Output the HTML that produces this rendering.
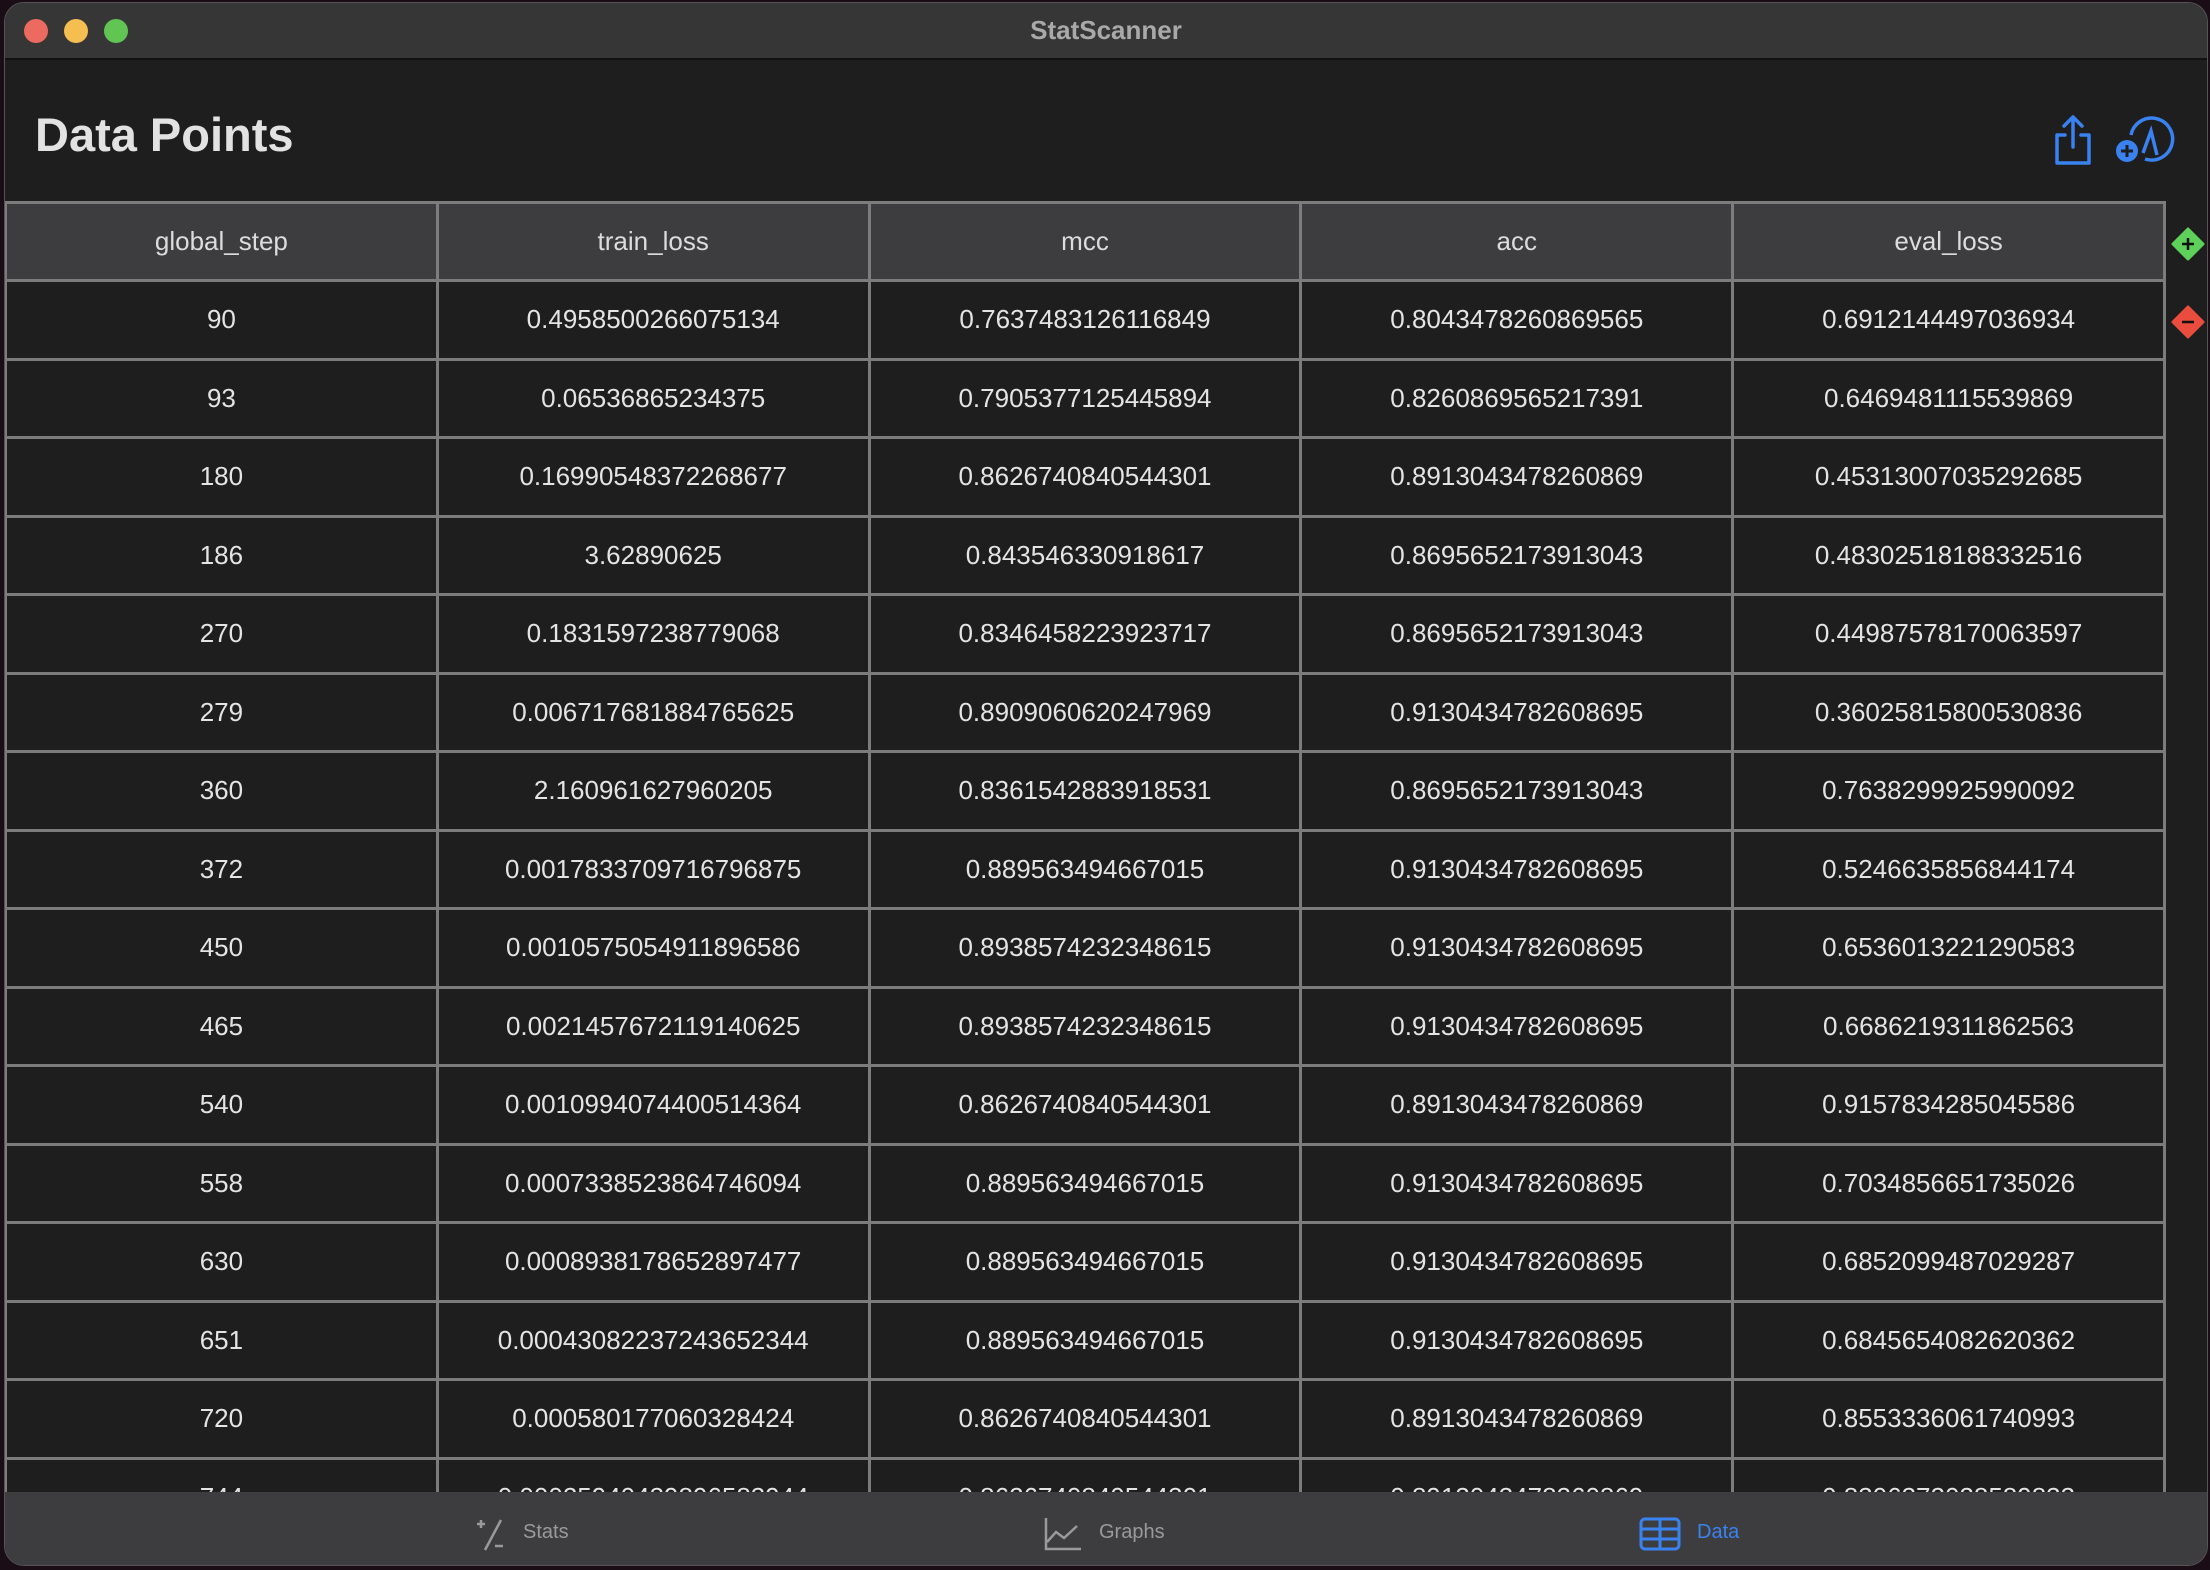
<!DOCTYPE html>
<html><head><meta charset="utf-8"><style>
*{margin:0;padding:0;box-sizing:border-box}
body{width:2210px;height:1570px;background:#1b0d16;overflow:hidden;font-family:"Liberation Sans",sans-serif;position:relative}
.win{position:absolute;left:4px;top:2px;width:2204px;height:1564px;background:#1e1e1e;border-radius:20px;overflow:hidden;border:1px solid #555}
.tb{position:absolute;left:0;top:0;width:100%;height:57px;background:#363636;border-bottom:2px solid #111}
.tb .t{position:absolute;left:0;right:0;top:12px;text-align:center;color:#a9a9a9;font-weight:bold;font-size:26px}
.dot{position:absolute;top:16px;width:24px;height:24px;border-radius:50%}
h1{position:absolute;left:30px;top:104px;color:#e2e2e2;font-size:47px;font-weight:bold}
.grid{position:absolute;left:-1px;top:198px;width:2162px;display:grid;grid-template-columns:repeat(5,1fr);gap:3px;padding:3px;background:#7c7c7c}
.grid div{height:75.5px;background:#1e1e1e;color:#e4e4e4;font-size:26px;display:flex;align-items:center;justify-content:center}
.grid div.h{background:#3d3d3f;height:75px;color:#dcdcdc}
.tab{position:absolute;left:0;top:1489px;width:100%;height:75px;background:#3d3d3f}
.tab span{position:absolute;top:29px;font-size:20px;color:#9a9a9a}
</style></head><body>
<div class="win">
<div class="tb"><div class="dot" style="left:19px;background:#ec6a5f"></div><div class="dot" style="left:59px;background:#f4bf50"></div><div class="dot" style="left:99px;background:#61c554"></div><div class="t">StatScanner</div></div>
<h1>Data Points</h1>
<svg style="position:absolute;left:2046px;top:110px" width="44" height="54" viewBox="0 0 44 54"><path d="M14 22H6v28h32V22h-8M22 4v30M13 13l9-9 9 9" fill="none" stroke="#3a82f0" stroke-width="3.5" stroke-linecap="round" stroke-linejoin="round"/></svg>
<svg style="position:absolute;left:2110px;top:112px" width="60" height="52" viewBox="0 0 60 52"><path d="M16 20A21 21 0 1 1 30 44" fill="none" stroke="#3a82f0" stroke-width="3.5"/><path d="M28 38l8-22 6 24" fill="none" stroke="#3a82f0" stroke-width="3.5"/><circle cx="12" cy="36" r="11" fill="#3a82f0"/><path d="M12 30v12M6 36h12" stroke="#1e1e1e" stroke-width="3"/></svg>
<svg style="position:absolute;left:2166px;top:224px" width="34" height="34" viewBox="0 0 34 34"><path d="M17 2l15 15-15 15L2 17z" fill="#5ed15a" stroke="#5ed15a" stroke-width="3" stroke-linejoin="round"/><path d="M17 11v12M11 17h12" stroke="#111" stroke-width="2.5"/></svg>
<svg style="position:absolute;left:2166px;top:302px" width="34" height="34" viewBox="0 0 34 34"><path d="M17 2l15 15-15 15L2 17z" fill="#ea4d3d" stroke="#ea4d3d" stroke-width="3" stroke-linejoin="round"/><path d="M11 17h12" stroke="#111" stroke-width="2.5"/></svg>
<div class="grid">
<div class="h">global_step</div><div class="h">train_loss</div><div class="h">mcc</div><div class="h">acc</div><div class="h">eval_loss</div>
<div>90</div><div>0.4958500266075134</div><div>0.7637483126116849</div><div>0.8043478260869565</div><div>0.6912144497036934</div>
<div>93</div><div>0.06536865234375</div><div>0.7905377125445894</div><div>0.8260869565217391</div><div>0.6469481115539869</div>
<div>180</div><div>0.16990548372268677</div><div>0.8626740840544301</div><div>0.8913043478260869</div><div>0.45313007035292685</div>
<div>186</div><div>3.62890625</div><div>0.843546330918617</div><div>0.8695652173913043</div><div>0.48302518188332516</div>
<div>270</div><div>0.1831597238779068</div><div>0.8346458223923717</div><div>0.8695652173913043</div><div>0.44987578170063597</div>
<div>279</div><div>0.006717681884765625</div><div>0.8909060620247969</div><div>0.9130434782608695</div><div>0.36025815800530836</div>
<div>360</div><div>2.160961627960205</div><div>0.8361542883918531</div><div>0.8695652173913043</div><div>0.7638299925990092</div>
<div>372</div><div>0.0017833709716796875</div><div>0.889563494667015</div><div>0.9130434782608695</div><div>0.5246635856844174</div>
<div>450</div><div>0.0010575054911896586</div><div>0.8938574232348615</div><div>0.9130434782608695</div><div>0.6536013221290583</div>
<div>465</div><div>0.0021457672119140625</div><div>0.8938574232348615</div><div>0.9130434782608695</div><div>0.6686219311862563</div>
<div>540</div><div>0.0010994074400514364</div><div>0.8626740840544301</div><div>0.8913043478260869</div><div>0.9157834285045586</div>
<div>558</div><div>0.0007338523864746094</div><div>0.889563494667015</div><div>0.9130434782608695</div><div>0.7034856651735026</div>
<div>630</div><div>0.0008938178652897477</div><div>0.889563494667015</div><div>0.9130434782608695</div><div>0.6852099487029287</div>
<div>651</div><div>0.00043082237243652344</div><div>0.889563494667015</div><div>0.9130434782608695</div><div>0.6845654082620362</div>
<div>720</div><div>0.000580177060328424</div><div>0.8626740840544301</div><div>0.8913043478260869</div><div>0.8553336061740993</div>
<div>744</div><div>0.00025940439896583944</div><div>0.8626740840544301</div><div>0.8913043478260869</div><div>0.8306372028589833</div>
</div>
<div class="tab">
<svg style="position:absolute;left:470px;top:26px" width="34" height="34" viewBox="0 0 34 34"><path d="M2 6h8M6 2v8M26 2L10 32M20 28h8" stroke="#9a9a9a" stroke-width="2.5" fill="none"/></svg><span style="left:518px">Stats</span>
<svg style="position:absolute;left:1038px;top:24px" width="40" height="36" viewBox="0 0 40 36"><path d="M3 2v31h35M4 26l9-10 8 6 13-12" stroke="#9a9a9a" stroke-width="2.5" fill="none"/></svg><span style="left:1094px">Graphs</span>
<svg style="position:absolute;left:1634px;top:25px" width="42" height="34" viewBox="0 0 42 34"><rect x="2" y="2" width="38" height="30" rx="4" fill="none" stroke="#3a82f0" stroke-width="3"/><path d="M2 12h38M2 22h38M21 2v30" stroke="#3a82f0" stroke-width="3"/></svg><span style="left:1692px;color:#3a82f0">Data</span>
</div>
</div>
</body></html>
